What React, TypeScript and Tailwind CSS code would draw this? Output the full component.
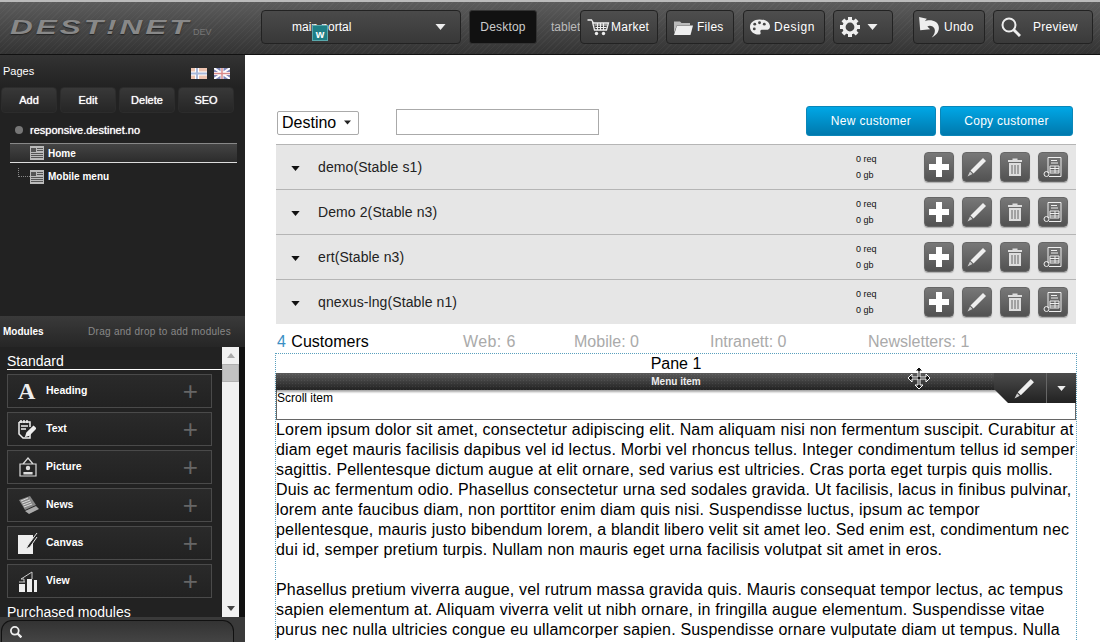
import React from "react";

const font = { fontFamily: '"Liberation Sans", Arial, sans-serif' };

const HBtn = ({ cls, children }: { cls: string; children: React.ReactNode }) => (
  <div className={`${cls} h-[34px] shrink-0 flex items-center rounded-[4px] border border-[#222] bg-gradient-to-b from-[#4e4e4e] to-[#3a3a3a] text-white text-[12px] tracking-[0.25px] relative z-10`}>
    {children}
  </div>
);

const Cart = () => (
  <svg width="23" height="17" viewBox="0 0 22 17" fill="none">
    <path d="M0 1h4l2 3h15l-2 7H7L5 3" stroke="#eee" strokeWidth="1.3" />
    <path d="M7 6h13M8 8.5h11M10 4v7M13 4v7M16 4v7" stroke="#eee" strokeWidth="1" />
    <circle cx="9" cy="14.5" r="1.7" fill="#eee" />
    <circle cx="16" cy="14.5" r="1.7" fill="#eee" />
  </svg>
);
const FolderI = () => (
  <svg width="20" height="15" viewBox="0 0 20 15">
    <path d="M1 3V1.5h6L8.5 3H17v2H4L1 13z" fill="#bbb" />
    <path d="M4 5.500h16L17.500 15H1z" fill="#eee" />
  </svg>
);
const PaletteI = () => (
  <svg width="20" height="16" viewBox="0 0 21 16">
    <path d="M10 0C4 0 0 3.500 0 8s4 8 9 8c2 0 2.500-1 2-2.500-.5-1.500 0-2.500 2-2.500h4c2.500 0 4-1 4-3.500C21 3 16 0 10 0z" fill="#eee" />
    <circle cx="5" cy="5" r="1.500" fill="#444" />
    <circle cx="10" cy="3.500" r="1.500" fill="#444" />
    <circle cx="15" cy="5" r="1.500" fill="#444" />
    <circle cx="4.500" cy="10" r="1.500" fill="#444" />
  </svg>
);
const GearI = () => (
  <svg width="20" height="20" viewBox="0 0 20 20">
    <g fill="#eee">
      {[0, 45, 90, 135, 180, 225, 270, 315].map((a) => (
        <rect key={a} x="8" y="0" width="4" height="5" transform={`rotate(${a} 10 10)`} />
      ))}
    </g>
    <circle cx="10" cy="10" r="6" fill="none" stroke="#eee" strokeWidth="3.200" />
  </svg>
);
const UndoI = () => (
  <svg width="22" height="22" viewBox="0 0 20 20">
    <path d="M1 1l7 1.500-1.800 2.200C10 3 19 3.500 19 11c0 4-3 7-6.500 8.500 2.500-3 3.500-5.500 2.500-8-1-2.500-4.500-3.500-6.500-2L11 12l-9 1z" fill="#eee" />
  </svg>
);
const SearchI = ({ s = 20, sw = 2 }: { s?: number; sw?: number }) => (
  <svg width={s} height={s} viewBox="0 0 20 20" fill="none">
    <circle cx="8" cy="8" r="6.500" stroke="#eee" strokeWidth={sw} />
    <path d="M12.500 12.500L19 19" stroke="#eee" strokeWidth={sw + 1} />
  </svg>
);
const Caret = ({ c = "#eee", w = 11, h = 6 }: { c?: string; w?: number; h?: number }) => (
  <svg width={w} height={h} viewBox="0 0 10 6"><path d="M0 0h10L5 6z" fill={c} /></svg>
);
const PencilI = ({ s = 20 }: { s?: number }) => (
  <svg width={s} height={s} viewBox="0 0 20 20">
    <path d="M16 1l3 3L6.500 16.500l-3-3z" fill="#eee" />
    <path d="M3 14.500l2.500 2.500L0.500 19.500z" fill="#ccc" />
  </svg>
);
const PageI = () => (
  <svg width="14" height="14" viewBox="0 0 14 14">
    <rect width="14" height="14" fill="#bbb" />
    <rect x="1" y="2" width="5" height="4" fill="#555" />
    <path d="M7 2.500h6M7 4.500h6M1 7.500h12M1 9.500h12M1 11.500h12" stroke="#555" strokeWidth="1" />
  </svg>
);
const FlagNo = () => (
  <svg width="16" height="11" viewBox="0 0 16 11">
    <rect width="16" height="11" fill="#eec4b0" />
    <rect x="4" width="4" height="11" fill="#fff" />
    <rect y="3.500" width="16" height="4" fill="#fff" />
    <rect x="5" width="2" height="11" fill="#a9b8d8" />
    <rect y="4.500" width="16" height="2" fill="#a9b8d8" />
  </svg>
);
const FlagUk = () => (
  <svg width="16" height="11" viewBox="0 0 16 11">
    <rect width="16" height="11" fill="#7f86b8" />
    <path d="M0 0l16 11M16 0L0 11" stroke="#fff" strokeWidth="2" />
    <path d="M8 0v11M0 5.500h16" stroke="#fff" strokeWidth="3" />
    <path d="M8 0v11M0 5.500h16" stroke="#d98a8a" strokeWidth="1.500" />
  </svg>
);

const ModIcon = ({ name }: { name: string }) => {
  if (name === "Heading")
    return <span className="text-[24px] font-bold text-[#eee] leading-none" style={{ fontFamily: '"Liberation Serif", serif' }}>A</span>;
  if (name === "Text")
    return (
      <svg width="18" height="20" viewBox="0 0 18 20" fill="none" stroke="#eee" strokeWidth="1.500">
        <path d="M1 3h11v5M1 3v12l4 4h7v-4" />
        <path d="M3 1v3M6 1v3M9 1v3M3 7h7M3 10h5" />
        <path d="M16 7l-7 7-1 3 3-1 7-7" fill="#eee" />
      </svg>
    );
  if (name === "Picture")
    return (
      <svg width="20" height="20" viewBox="0 0 20 20" fill="none" stroke="#ddd" strokeWidth="1.200">
        <path d="M2 7h16v12H2zM5 7l5-6 5 6" />
        <circle cx="10" cy="11" r="1.600" fill="#ddd" />
        <path d="M6 15.500h8v1.500H6z" fill="#ddd" />
      </svg>
    );
  if (name === "News")
    return (
      <svg width="21" height="20" viewBox="0 0 21 20">
        <path d="M1 5L12 1l6 9-11 5z" fill="#888" />
        <path d="M3 6l7-3M4 8l8-3M5 10l8-3M6 12l8-3" stroke="#ddd" strokeWidth="1" />
        <path d="M7 16l11-5 3 3-10 5z" fill="#aaa" />
      </svg>
    );
  if (name === "Canvas")
    return (
      <svg width="20" height="21" viewBox="0 0 20 21">
        <path d="M0 2h15v19H0z" fill="#eee" />
        <path d="M19 0L10 12l-2 4 4-2 7-10" fill="#222" stroke="#eee" strokeWidth="1" />
      </svg>
    );
  return (
    <svg width="20" height="21" viewBox="0 0 20 21">
      <path d="M1 13h6v8H1zM9 8h5v13H9zM16 9h3v12h-3z" fill="#eee" />
      <path d="M3 8l11-7v7M1 11h6M3 8h3v3" stroke="#ccc" strokeWidth="1" fill="none" />
    </svg>
  );
};

const modules = ["Heading", "Text", "Picture", "News", "Canvas", "View"];

const customers = ["demo(Stable s1)", "Demo 2(Stable n3)", "ert(Stable n3)", "qnexus-lng(Stable n1)"];

const RowBtn = ({ children }: { children: React.ReactNode }) => (
  <div className="w-[30px] h-[30px] rounded-[4px] bg-gradient-to-b from-[#787878] to-[#525252] border border-[#666] flex items-center justify-center shadow-[0_1px_1px_rgba(0,0,0,0.25)]">
    {children}
  </div>
);

const LOREM1 =
  "Lorem ipsum dolor sit amet, consectetur adipiscing elit. Nam aliquam nisi non fermentum suscipit. Curabitur at diam eget mauris facilisis dapibus vel id lectus. Morbi vel rhoncus tellus. Integer condimentum tellus id semper sagittis. Pellentesque dictum augue at elit ornare, sed varius est ultricies. Cras porta eget turpis quis mollis. Duis ac fermentum odio. Phasellus consectetur urna sed sodales gravida. Ut facilisis, lacus in finibus pulvinar, lorem ante faucibus diam, non porttitor enim diam quis nisi. Suspendisse luctus, ipsum ac tempor pellentesque, mauris justo bibendum lorem, a blandit libero velit sit amet leo. Sed enim est, condimentum nec dui id, semper pretium turpis. Nullam non mauris eget urna facilisis volutpat sit amet in eros.";
const LOREM2 =
  "Phasellus pretium viverra augue, vel rutrum massa gravida quis. Mauris consequat tempor lectus, ac tempus sapien elementum at. Aliquam viverra velit ut nibh ornare, in fringilla augue elementum. Suspendisse vitae purus nec nulla ultricies congue eu ullamcorper sapien. Suspendisse ornare vulputate diam ut tempus. Nulla";

export default function App() {
  return (
    <div className="w-[1100px] h-[642px] overflow-hidden flex flex-col bg-white relative" style={font}>
      {/* header */}
      <header className="h-[55px] shrink-0 flex items-center border-t-[2px] border-t-[#bbb] border-b border-b-[#111] pb-[2px] bg-[repeating-linear-gradient(135deg,rgba(255,255,255,0.03)_0_1px,transparent_1px_4px),linear-gradient(#5c5c5c,#333)]">
        <div className="w-[261px] shrink-0 pl-[10px] flex items-end">
          <div className="w-[183px] shrink-0 h-[20px] overflow-visible">
            <span className="inline-block origin-left scale-x-[1.5] text-[21px] leading-[20px] font-bold italic tracking-[2px] text-[#888] [text-shadow:0_1px_1px_#222]">DEST!NET</span>
          </div>
          <span className="text-[9px] leading-[9px] text-[#777]">DEV</span>
        </div>
        <div className="w-[200px] h-[34px] shrink-0 rounded-[4px] border border-[#222] bg-gradient-to-b from-[#4a4a4a] to-[#383838] flex items-center justify-between pl-[30px] pr-[14px] text-[12px] text-white">
          <span>main portal</span>
          <Caret />
        </div>
        <div className="w-[68px] h-[34px] shrink-0 ml-[8px] rounded-[3px] bg-[#111] border border-[#333] flex items-center justify-center text-[12px] tracking-[0.2px] text-[#ccc]">Desktop</div>
        <div className="w-[43px] shrink-0 pl-[14px] text-[12px] text-[#bbb] overflow-hidden whitespace-nowrap">tablet</div>
        <HBtn cls="w-[78px] pl-[6px] gap-[1px]"><Cart /><span>Market</span></HBtn>
        <HBtn cls="w-[68px] ml-[8px] pl-[6px] gap-[4px]"><FolderI /><span>Files</span></HBtn>
        <HBtn cls="w-[82px] ml-[9px] pl-[6px] gap-[4px]"><PaletteI /><span className="tracking-[0.6px]">Design</span></HBtn>
        <HBtn cls="w-[60px] ml-[8px] pl-[6px] gap-[7px]"><GearI /><Caret w={11} /></HBtn>
        <HBtn cls="w-[72px] ml-[20px] pl-[4px] gap-[4px]"><UndoI /><span>Undo</span></HBtn>
        <HBtn cls="w-[100px] ml-[8px] pl-[7px] gap-[12px]"><SearchI /><span className="tracking-[0.3px]">Preview</span></HBtn>
      </header>

      <div className="flex-1 flex min-h-0">
        {/* sidebar */}
        <aside className="w-[245px] shrink-0 bg-[#222] flex flex-col text-white">
          <div className="h-[32px] shrink-0 flex items-center justify-between pl-[3px] pr-[15px] text-[11px] bg-gradient-to-b from-[#333] to-[#222]">
            <span>Pages</span>
            <div className="flex gap-[7px] mt-[4px]"><FlagNo /><FlagUk /></div>
          </div>
          <div className="flex gap-[3px] pl-[1px] h-[26px] shrink-0">
            {["Add", "Edit", "Delete", "SEO"].map((b) => (
              <div key={b} className="w-[56px] rounded-[4px] border border-[#2c2c2c] bg-gradient-to-b from-[#383838] to-[#262626] flex items-center justify-center text-[11px] [text-shadow:0_0_1px_#fff]">{b}</div>
            ))}
          </div>
          <div className="h-[26px] shrink-0 flex items-center pl-[15px] mt-[4px] text-[11px] [text-shadow:0_0_1px_#fff]">
            <span className="w-[8px] h-[8px] rounded-full bg-[#777] mr-[7px]" />
            responsive.destinet.no
          </div>
          <div className="ml-[10px] w-[227px] h-[20px] shrink-0 border-t border-t-[#888] border-b border-b-[#ddd] bg-gradient-to-b from-[#444] to-[#2c2c2c] flex items-center pl-[20px] gap-[4px] text-[10px] font-bold">
            <PageI /> Home
          </div>
          <div className="h-[27px] shrink-0 flex items-center pl-[18px] text-[10px] font-bold">
            <span className="w-[12px] h-[9px] mb-[8px] border-l border-b border-dotted border-[#888]" />
            <PageI /><span className="ml-[4px]">Mobile menu</span>
          </div>
          <div className="flex-1 min-h-0" />
          <div className="h-[31px] shrink-0 flex items-center justify-between pl-[3px] pr-[14px] bg-gradient-to-b from-[#3a3a3a] to-[#262626] text-[10px]">
            <span className="font-bold">Modules</span>
            <span className="text-[#888] tracking-[0.28px]">Drag and drop to add modules</span>
          </div>
          <div className="h-[270px] shrink-0 flex border-r-[6px] border-r-[#111] overflow-hidden">
            <div className="flex-1 min-w-0 overflow-hidden">
              <div className="ml-[7px] mt-[7px] border-b border-b-white text-[14px] leading-[15px] h-[16px]">Standard</div>
              <div className="ml-[7px] w-[205px] mt-[4px] flex flex-col gap-[4px]">
                {modules.map((m) => (
                  <div key={m} className="h-[34px] border border-[#4a4a4a] bg-gradient-to-b from-[#2a2a2a] to-[#222] flex items-center text-[10.5px] font-bold">
                    <div className="w-[38px] pl-[10px] flex items-center justify-start shrink-0"><ModIcon name={m} /></div>
                    <span className="flex-1">{m}</span>
                    <span className="text-[26px] leading-none font-normal text-[#666] pr-[13px]">+</span>
                  </div>
                ))}
              </div>
              <div className="ml-[7px] mt-[6px] text-[14px] leading-[16px] whitespace-nowrap">Purchased modules</div>
            </div>
            <div className="w-[17px] shrink-0 bg-[#f1f1f1] flex flex-col items-center justify-between py-[6px] relative">
              <svg width="8" height="5" viewBox="0 0 8 5"><path d="M4 0l4 5H0z" fill="#aaa" /></svg>
              <div className="absolute top-[17px] left-0 w-[17px] h-[18px] bg-[#c2c2c2] border border-[#b0b0b0]" />
              <Caret c="#444" w={8} h={5} />
            </div>
          </div>
          <div className="h-[25px] shrink-0 bg-[#3a3a3a] flex items-end pl-[1px]">
            <div className="w-[233px] h-[22px] rounded-t-[11px] border-t border-x border-[#111] bg-gradient-to-b from-[#333] to-[#444] flex items-center pl-[8px]">
              <SearchI s={12} sw={3} />
            </div>
          </div>
        </aside>

        {/* main */}
        <main className="flex-1 min-w-0 pl-[31px] pr-[24px] overflow-hidden">
          <div className="h-[38px] mt-[51px] flex items-start relative">
            <div className="w-[82px] h-[24px] mt-[5px] ml-[1px] border border-[#aaa] rounded-[2px] flex items-center pl-[4px] text-[16px] text-black">
              Destino<span className="ml-[8px] mb-[2px]"><Caret c="#222" w={7} h={5} /></span>
            </div>
            <div className="w-[203px] h-[26px] mt-[3px] ml-[37px] border border-[#aaa]" />
            <div className="ml-auto mr-[3px] flex gap-[4px]">
              {["New customer", "Copy customer"].map((t, i) => (
                <div key={t} className={`${i ? "w-[133px]" : "w-[130px]"} h-[30px] rounded-[3px] bg-gradient-to-b from-[#00a7e6] to-[#0079ad] border border-[#0a86b8] flex items-center justify-center text-white text-[12px] tracking-[0.3px]`}>{t}</div>
              ))}
            </div>
          </div>
          <div className="flex flex-col">
            {customers.map((c) => (
              <div key={c} className="h-[45px] border-t border-t-[#b5b5b5] bg-[#e6e6e6] flex items-center">
                <span className="ml-[15px] mt-[3px]"><Caret c="#111" w={9} h={5} /></span>
                <span className="ml-[18px] w-[538px] text-[14px] tracking-[0.1px] text-[#222]">{c}</span>
                <div className="w-[68px] text-[9px] leading-[16px] text-[#111]"><div>0 req</div><div>0 gb</div></div>
                <div className="flex gap-[8px]">
                  <RowBtn>
                    <svg width="20" height="20" viewBox="0 0 20 20"><path d="M7 0h6v7h7v6h-7v7H7v-7H0V7h7z" fill="#fff" /></svg>
                  </RowBtn>
                  <RowBtn><PencilI /></RowBtn>
                  <RowBtn>
                    <svg width="14" height="18" viewBox="0 0 14 18"><path d="M4.500 2V.5h5V2H14v2H0V2zM1 5h12v13H1z" fill="#ddd" /><path d="M4 7v9M7 7v9M10 7v9" stroke="#666" strokeWidth="1" /></svg>
                  </RowBtn>
                  <RowBtn>
                    <svg width="20" height="22" viewBox="0 0 20 22" fill="none" stroke="#eee" strokeWidth="1"><path d="M5 17V1.500h13v19H6" /><path d="M8 4.500h6M8 7h7M7 10h9v7H7zM7 12.500h9M7 15h9M12 10v7" /><circle cx="3.500" cy="18" r="2.500" /></svg>
                  </RowBtn>
                </div>
              </div>
            ))}
          </div>
          <div className="h-[29px] pt-[7px] flex items-center text-[16px] leading-[20px] text-[#aaa]">
            <span className="w-[187px] pl-[1px] text-black whitespace-nowrap"><span className="text-[#3a8fc4]">4</span> <span className="ml-[1px]">Customers</span></span>
            <span className="w-[111px] tracking-[0.4px]">Web: 6</span>
            <span className="w-[136px]">Mobile: 0</span>
            <span className="w-[158px]">Intranett: 0</span>
            <span className="whitespace-nowrap">Newsletters: 1</span>
          </div>
          <div className="w-[802px] -ml-[1px] border border-dotted border-[#5aa0bd] border-b-0">
            <div className="h-[19px] flex items-center justify-center text-[16px] text-black">Pane 1</div>
            <div className="h-[17px] relative bg-[radial-gradient(rgba(255,255,255,0.07)_1px,transparent_1px),linear-gradient(#5a5a5a,#222)] bg-[length:3px_3px,100%_100%] shadow-[0_2px_2px_rgba(0,0,0,0.35)] flex items-center justify-center text-[10px] font-bold text-[#eee]">
              Menu item
              <div className="absolute right-0 top-0 w-[82px] h-[30px] z-10 bg-gradient-to-b from-[#4c4c4c] to-[#222] [clip-path:polygon(0_0,100%_0,100%_100%,14px_100%,0_16px)] flex items-center">
                <span className="ml-[20px] w-[32px]"><PencilI s={21} /></span>
                <span className="h-full w-px bg-[#666]" />
                <span className="ml-[10px]"><Caret w={9} h={5} /></span>
              </div>
            </div>
            <div className="h-[30px] border border-t-0 border-[#666] text-[12px] leading-[14px] pt-[1px] text-black">Scroll item</div>
            <div className="text-[16px] leading-[20px] tracking-[0.17px] text-black">
              <p>{LOREM1}</p>
              <p className="mt-[20px]">{LOREM2}</p>
            </div>
          </div>
        </main>
      </div>

      {/* floating drag handle over the portal name */}
      <div className="absolute left-[312px] top-[25px] w-[16px] h-[16px] bg-[#1f7f86] border border-[#5aa9ad] flex items-end justify-center z-20">
        <span className="text-[11px] leading-[11px] font-bold text-white">w</span>
      </div>
      {/* move cursor */}
      <svg className="absolute left-[908px] top-[367px] z-20" width="22" height="22" viewBox="0 0 22 22">
        <path d="M11 0l4 4h-3v6h6V7l4 4-4 4v-3h-6v6h3l-4 4-4-4h3v-6H4v3l-4-4 4-4v3h6V4H7z" fill="#111" stroke="#fff" strokeWidth="1" />
      </svg>
    </div>
  );
}
